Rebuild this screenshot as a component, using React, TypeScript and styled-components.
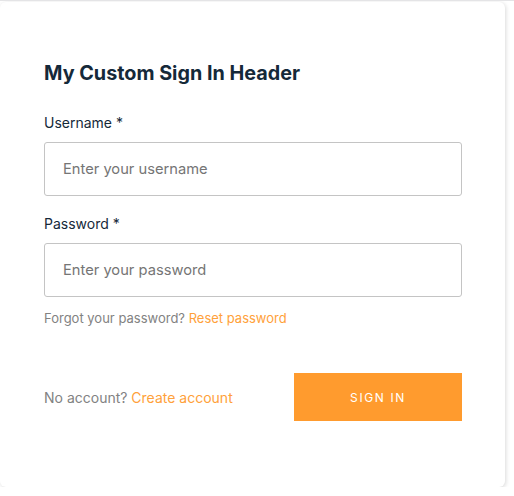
import React from 'react';
import styled, { createGlobalStyle } from 'styled-components';

const GlobalStyle = createGlobalStyle`
  body {
    margin: 0;
    background: #ffffff;
    font-family: Inter, 'Liberation Sans', sans-serif;
    border-top: 1px solid #e4e4e6;
  }
`;

const Card = styled.div`
  box-sizing: border-box;
  width: 505px;
  height: 485px;
  margin-top: 1px;
  padding: 59px 43px 0 44px;
  background: #ffffff;
  border-radius: 6px;
  box-shadow: 1px 1px 4px 0 rgba(0, 0, 0, 0.15);
  display: flex;
  flex-direction: column;
`;

const Header = styled.div`
  color: #152939;
  font-size: 19.8px;
  line-height: 24px;
  font-weight: 700;
  margin-bottom: 28px;
`;

const Field = styled.div`
  display: flex;
  flex-direction: column;
  margin-bottom: 18px;
`;

const Label = styled.label`
  color: #152939;
  font-size: 14px;
  line-height: 20px;
  margin-bottom: 9px;
`;

const Input = styled.input`
  box-sizing: border-box;
  width: 100%;
  height: 54px;
  padding: 0 18px;
  border: 1px solid #c4c4c4;
  border-radius: 3px;
  font-family: inherit;
  font-size: 14.7px;
  color: #152939;
  outline: none;

  &::placeholder {
    color: #757575;
  }
`;

const Hint = styled.div`
  margin-top: -6px;
  color: #828282;
  font-size: 13px;
  line-height: 18px;
`;

const Link = styled.a`
  color: #ffa13a;
  cursor: pointer;
`;

const Footer = styled.div`
  display: flex;
  align-items: center;
  justify-content: space-between;
  margin-top: 46px;
`;

const FooterText = styled.span`
  color: #828282;
  font-size: 14px;
`;

const Button = styled.button`
  width: 168px;
  height: 48px;
  border: none;
  background: #ff9b2e;
  color: #ffffff;
  font-family: inherit;
  font-size: 12px;
  letter-spacing: 1.6px;
  text-transform: uppercase;
  cursor: pointer;
`;

export default function App() {
  return (
    <>
      <GlobalStyle />
      <Card>
        <Header>My Custom Sign In Header</Header>
        <Field>
          <Label>Username *</Label>
          <Input placeholder="Enter your username" />
        </Field>
        <Field>
          <Label>Password *</Label>
          <Input type="password" placeholder="Enter your password" />
        </Field>
        <Hint>
          Forgot your password? <Link>Reset password</Link>
        </Hint>
        <Footer>
          <FooterText>
            No account? <Link>Create account</Link>
          </FooterText>
          <Button>Sign In</Button>
        </Footer>
      </Card>
    </>
  );
}
